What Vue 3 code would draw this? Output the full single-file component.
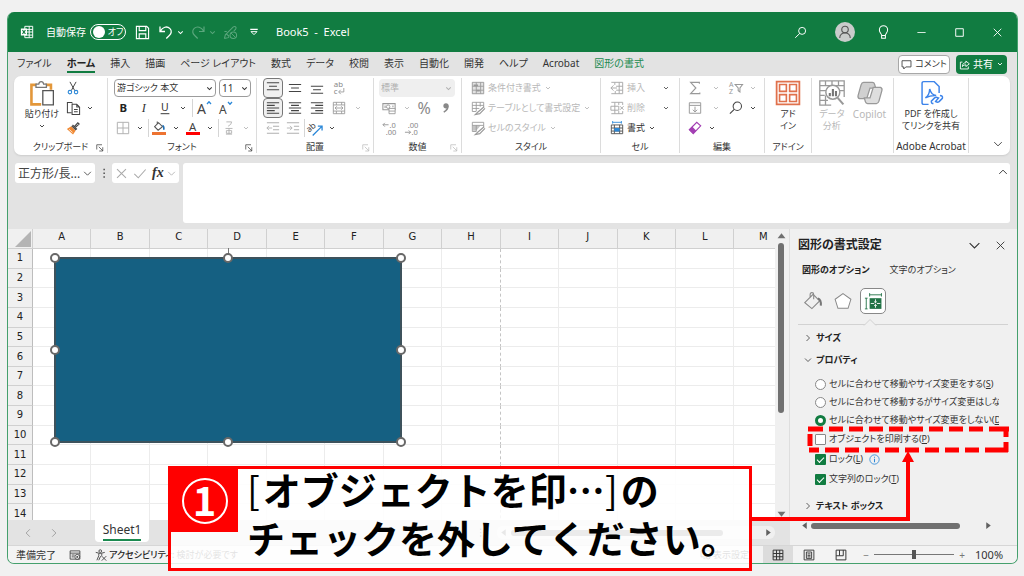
<script setup>
import { h, ref } from 'vue'

const K = '#444', G = '#b0b0b0', W = '#fff'
const line = (d, c = K, w = 1.2, extra = '') => `<path d="${d}" fill="none" stroke="${c}" stroke-width="${w}" ${extra}/>`
const fill = (d, c = K) => `<path d="${d}" fill="${c}"/>`
const bars = (list, c = K) => line(list.map(([x, y, w]) => `M${x} ${y}h${w}`).join(''), c, 1.3)
const txt = (x, y, s, t, c, extra = '') =>
  `<text x="${x}" y="${y}" font-size="${s}" fill="${c}" font-family="Noto Sans, sans-serif" ${extra}>${t}</text>`

const icons = {
  excel: line('M5.5 1.5h9v13h-9zM5.5 5h9M5.5 8h9M5.5 11.5h9M10.5 1.5v13', W, 1.1) + fill('M1 4h7v8H1z', W) + line('M2.8 5.8l3.4 4.4M6.2 5.8l-3.4 4.4', '#117c41', 1.2),
  save: line('M1.5 1.5h11l2 2v11h-13zM4.5 1.5v4.5h7v-4.5M4.5 14.5v-5h7v5', W, 1.2),
  undo: line('M2 2.5v5h5M2.3 7.2C4.5 3 9 1.8 11.8 4.4c2.4 2.4 1.6 5.2-.5 7.1L8.3 14.5', W, 1.3),
  redo: line('M14 2.5v5h-5M13.7 7.2C11.5 3 7 1.8 4.2 4.4c-2.4 2.4-1.6 5.2.5 7.1L7.7 14.5', '#5aa67c', 1.2),
  pen: line('M1.5 14.5l1-4L11 2q1.5-1 2.5 0t0 2.5L11.5 6.5M1.5 14.5l4-1 1-1M3.5 9.5l3 2.5M4 7h-2.5', '#5aa67c', 1.1) + '<circle cx="11" cy="11" r="3.5" fill="none" stroke="#5aa67c" stroke-width="1.1"/>' + line('M8.5 8.5l5 5', '#5aa67c', 1),
  qat: line('M3 4.5h10', W, 1.4) + line('M4 7.5h8L8 11.5z', W, 1.3),
  search: '<circle cx="10" cy="6" r="4.3" fill="none" stroke="#fff" stroke-width="1.2"/>' + line('M7 9.2L1.5 14.5', W),
  person: '<circle cx="8" cy="8" r="8" fill="#c9cccb"/><circle cx="8" cy="6" r="2.6" fill="none" stroke="#555" stroke-width=".9"/>' + line('M3.8 12.8c0-5.5 8.4-5.5 8.4 0', '#555', 0.9),
  bulb: line('M6 11.2C6 9 3.6 8.3 3.6 5.2a4.4 4.4 0 018.8 0C12.4 8.3 10 9 10 11.2zM6 11v3.2h4V11', W, 1.1),
  min: line('M2 8h12', W, 1.2),
  max: line('M2.5 2.5h11v11h-11z', W, 1.4),
  x: line('M2.5 2.5l11 11M13.5 2.5l-11 11', 'currentColor', 1.3),
  chev: line('M4 6l4 4 4-4', 'currentColor', 1.8),
  chevL: line('M2 5l6 6 6-6', 'currentColor', 1.4),
  chevU: line('M2 11l6-6 6 6', 'currentColor', 1.5),
  left: line('M11 2L5 8l6 6', 'currentColor', 1.4),
  right: line('M5 2l6 6-6 6', 'currentColor', 1.4),
  bubble: line('M1.5 2.5h13v9H7l-3 3v-3H1.5z', K, 1.3),
  share: line('M5 4.5H2v10h11.5V11M5 11c0-4 2-5.5 5-5.5V3l5 4-5 4V8.5C8 8.5 6.5 9 5 11z', W, 1.3),
  paste: line('M5 3H1.5v12h6M10 3h3.5v3', '#e3973a', 1.6) + '<path d="M4.3 4.5v-2H6Q6.200 1 7.500 1T9 2.500h1.700v2z" fill="#fff" stroke="#777" stroke-width=".8"/><path d="M8.500 6.500h6.500v8.800H8.500z" fill="#fff" stroke="#555" stroke-width=".8"/>',
  cut: line('M4.5 1L10 11M11.5 1L6 11', K, 1.1) + '<circle cx="4.5" cy="12.7" r="2" fill="none" stroke="#2b88d8" stroke-width="1.2"/><circle cx="11.5" cy="12.7" r="2" fill="none" stroke="#2b88d8" stroke-width="1.2"/>',
  copy: line('M6 12.5H1.5v-11h4.5l1 1', K, 1.1) + line('M6.5 3.5h5l3 3v8h-8zM11.5 3.5v3h3M8.5 9h4M8.5 11.5h4', K, 1.1),
  brush: fill('M1 9l5-3 5 5-3 4.5z', '#f08a35') + line('M6.5 5.5l5 5M7.5 4.5L9.5 6.5l4-4.5 1.5 1.5L10.5 7.5 12.5 9.5', K, 1.3) + line('M3.5 9.5l4 3.5', W, 0.8),
  bold: txt(4, 12.5, 13, 'B', '#222', 'font-weight="700"'),
  italic: txt(5.5, 12.5, 14, 'I', '#333', 'font-style="italic" style="font-family:Liberation Serif,serif"'),
  under: txt(3.5, 11.5, 12, 'U', '#333') + line('M3 14.5h10', '#333', 1.1),
  grow: txt(1, 13.5, 14, 'A', '#444') + line('M11 4l2-2.2L15 4', '#2b88d8', 1.3),
  shrink: txt(2, 13.5, 12, 'A', '#444') + line('M11 2l2 2.2L15 2', '#2b88d8', 1.3),
  borders: line('M1.5 1.5h13v13h-13zM8 1.5v13M1.5 8h13', G, 1.1),
  bucket: line('M3 6.5l4.5-4.5 4.5 4.5-5 4zM6 3V.5', '#555', 1.2) + line('M12 5q2 1 1.5 5', '#1f6fb5', 1.8) + fill('M0 12.5h16V16H0z', '#ed7331'),
  fontcol: txt(3.5, 11, 13, 'A', '#444') + fill('M0 12.5h16V16H0z', '#ff0000'),
  ruby: line('M5 1h6q0 3-4 5', G, 1) + line('M4 8.5h8M4.5 15h7M5 11h6v3H5zM8 8.5V15', G, 1),
  top: bars([[1, 2, 14], [3.5, 6, 9], [1, 10, 14]]),
  mid: bars([[1, 4, 14], [3.5, 8, 9], [1, 12, 14]]),
  bot: bars([[1, 6, 14], [3.5, 10, 9], [1, 14, 14]]),
  al: bars([[1, 2, 14], [1, 5, 9], [1, 8, 14], [1, 11, 9], [1, 14, 14]]),
  ac: bars([[1, 2, 14], [3.5, 5, 9], [1, 8, 14], [3.5, 11, 9], [1, 14, 14]]),
  ar: bars([[1, 2, 14], [6, 5, 9], [1, 8, 14], [6, 11, 9], [1, 14, 14]]),
  wrap: txt(2, 7, 9, 'ab', '#888') + txt(2, 15, 9, 'c', '#888') + line('M13.5 8v4.5H8M10 10l-2.5 2.5L10 15', '#999', 1),
  merge: line('M1.5 1.5h13v13h-13zM1.5 4.5h13M1.5 11.5h13M5 1.5v3M11 1.5v3M5 11.5v3M11 11.5v3M3.5 8h9M5.5 6l-2 2 2 2M10.5 6l2 2-2 2', '#999', 1),
  outdent: bars([[1, 2, 14], [8, 6, 7], [8, 10, 7], [1, 14, 14]], G) + line('M7 8H1M3.5 5.5L1 8l2.5 2.5', G, 1),
  indent: bars([[1, 2, 14], [9, 6, 6], [9, 10, 6], [1, 14, 14]], G) + line('M1 8h6M4.5 5.5L7 8l-2.5 2.5', G, 1),
  orient: txt(-1, 9, 9, 'ab', '#444', 'transform="rotate(-40 5 8)"') + line('M5 15.5L14.5 6M10.5 5.5H15V10', '#2b88d8', 1.4),
  currency: line('M1 3h14v7H1zM3.5 5v3M12.5 5v2', '#999', 1.2) + '<circle cx="7" cy="6.5" r="2" fill="none" stroke="#999"/><path d="M8 8.5h7v6H8zM8 11.5h7" fill="#fff" stroke="#999"/>',
  percent: txt(0.5, 13.5, 16, '%', '#8a8a8a'),
  comma: '<circle cx="8" cy="5" r="3.5" fill="#888"/>' + line('M10.5 5q.5 5-5.5 8.5', '#888', 2),
  decInc: txt(8, 7, 8, '.0', '#888') + txt(4, 15, 8, '.00', '#888') + line('M7 4H1M3 2L1 4l2 2', '#999', 1),
  decDec: txt(4, 7, 8, '.00', '#888') + txt(8, 15, 8, '.0', '#888') + line('M1 12h6M5 10l2 2-2 2', '#999', 1),
  cond: fill('M1 1h14v14H1z', '#e2e2e2') + line('M1.5 1.5h13v13h-13zM1.5 6h13M1.5 10.5h13M6 1.5v13M11 1.5v13', '#9a9a9a', 1) + fill('M3 4h5v2H3zM6 10h4v2H6z', '#999'),
  tstyle: line('M1.5 12V1.5h13V7M1.5 5h13M1.5 8.5h8M6 1.5v10M10.5 1.5v5M1.5 12H6', '#9a9a9a', 1) + line('M15 6.5l-7 6-3 3 5-1 6-6', '#9a9a9a', 1.4),
  cstyle: fill('M2 5h9l-5 6H2z', '#c4c4c4') + line('M1.5 12V1.5h13V7M1.5 5h13M1.5 12H6V5', '#9a9a9a', 1) + line('M15 6.5l-7 6-3 3 5-1 6-6', '#9a9a9a', 1.4),
  cins: line('M1.5 1.5h13v13h-13M5.5 1.5v3M10.5 1.5v13M6 11.5v3M7 6h7.5M7 10.5h7.5M8 8H1M4 5L1 8l3 3', '#aaa', 1.1),
  cdel: line('M1.5 1.5h13v3M1.5 14.5h13v-3M5.5 1.5v13M10 1.5v3M10 11.5v3M1 6h9v4.5H1zM11.5 6l4 4M15.5 6l-4 4', '#aaa', 1.1),
  cfmt: line('M1.5 4.5h13v10h-13zM5 4.5v10M11 4.5v10M1.5 8h13M1.5 11.5h13', '#555', 1.1) + fill('M5 8h6v4H5z', '#2b88d8') + line('M3 1.5h10M3 0v3M13 0v3', '#2b88d8', 1),
  sum: line('M13 3V1.5H3L9 8l-6 6.5h10.5V13', '#999', 1.3),
  sort: txt(0, 7, 8, 'A', '#999') + txt(0, 15, 8, 'Z', '#999') + line('M7 4h8.5l-3 4v4.5l-2-1.5V8z', '#999', 1.2),
  fillD: line('M1.5 2h13v12h-13zM1.5 5h13M8 6.5v6M5.5 10L8 12.5 10.5 10', '#999', 1.1),
  find: '<circle cx="9.5" cy="6" r="4.8" fill="none" stroke="#444" stroke-width="1.2"/>' + line('M6 9.5L1 14.5', K, 1.3),
  eraser: line('M1.5 10L10 1.5l4.5 4L6 14.5z', '#a33fb3', 1.3) + fill('M1.5 10L5 6.5l4.5 4.5L6 14.5z', '#a33fb3'),
  addin: line('M1 1h14v14H1z', '#e0714c', 1.1) + line('M2.8 2.8H7V7H2.8zM9 2.8h4.2V7H9zM2.8 9H7v4.2H2.8zM9 9h4.2v4.2H9z', '#e0714c', 1),
  analyze: line('M.5.5h15v3H.5zM.5 3.5v12h7M15.5 3.5v7M.5 6.5h4M.5 9.5h3M.5 12.5h5M4 9.5v6M4 .5v3M8 .5v3M12 .5v3M12 6.5h3.5', '#999', 0.8) + '<circle cx="8.5" cy="7.5" r="4.3" fill="#fff" stroke="#999" stroke-width=".9"/>' + line('M11.5 11l3.5 4', '#999', 1.3) + fill('M6 8h1.3v2H6zM7.9 5.5h1.3V10H7.9zM9.8 6.8h1.3V10H9.8z', '#777'),
  copilot: '<path d="M4 1.5h5.5q1 0 1.3 1L11.5 5H8L6 11.5H1.5Q.3 11 .7 9.5L2.5 3q.5-1.5 1.5-1.5z" fill="#d0d0d0" stroke="#999" stroke-width=".8"/><path d="M12 14.5H6.5q-1 0-1.3-1L4.5 11H8l2-6.5h4.5q1.2.5.8 2L13.5 13q-.5 1.5-1.5 1.5z" fill="#dedede" stroke="#999" stroke-width=".8"/>',
  pdf: line('M6.5 15h-3Q2.500 15 2.500 14V2q0-1 1-1H10l3 3v4M4.500 11q2.500-1.500 2.700-5.500 1 4 4 4-3.500-.2-6.700 1.500', '#3d84ea', 0.9) + line('M9.5 14.5q-1.500 0-1.300-1.500l2-2q1-.7 2 0M13.500 9.500q2 0 1.500 1.800l-2 2q-1 .7-2 0M10.500 13.500l2.500-2.800', '#3d84ea', 0.9),
  launch: line('M1.5 11V1.5H12M5.5 5.5l8 8M13.5 6.5V14H6.5', 'currentColor', 1.4),
  dots: fill('M7 1h2.5v2.5H7zM7 7h2.5v2.5H7zM7 13h2.5v2.5H7z', '#555'),
  check: line('M1.5 9L6 13.5 14.5 4', 'currentColor', 1.2),
  fillTool: line('M1.5 9l7-7L14 7.5 7.5 14zM6 5V2Q6 .5 7.5.5T9 2v4', '#888', 0.9) + line('M12.5 5.5q3 1 2.5 6', '#777', 1.7),
  pentagon: '<path d="M8 1.5l7 5-2.5 8h-9L1 6.500z" fill="#fff" stroke="#888" stroke-width=".9"/>',
  sizeTool: fill('M5 5.5h10.5V15H5z', '#217346') + line('M5 2.5h10.5M5 1v3M15.5 1v3M2 5.5V15M.8 5.5h2.4M.8 15h2.4', '#217346', 0.8) + line('M10.2 6.5v3M10.2 11v3M6 10.2h3M11.5 10.2h3M9 8.5l1.2 1 1.2-1M9 12.2l1.2-1 1.2 1', W, 0.8),
  info: '<circle cx="8" cy="8" r="6.8" fill="none" stroke="#2b88d8" stroke-width="1.2"/>' + line('M8 7v5M8 4v1.5', '#2b88d8', 1.5),
  macro: line('M1.5 2.5h13v11h-13zM1.5 5.5h13M3.5 8h4M3.5 10.5h3', K, 1.2) + '<circle cx="11" cy="10.5" r="3.3" fill="#f3f3f3" stroke="#444" stroke-width="1.2"/><circle cx="11" cy="10.5" r="1.3" fill="#444"/>',
  a11y: '<circle cx="7" cy="2.8" r="1.8" fill="none" stroke="#444" stroke-width="1.2"/>' + line('M1 4.5q6 3 12 0M5 6v3l-2.5 6M9 6v2.5l-2 2L5 15M9 9.5l6 6M15 9.5l-6 6', K, 1.2),
  disp: line('M9 11.5H1.5v-9h13V8M5 14h3', K, 1.2) + '<circle cx="12" cy="12" r="2.5" fill="none" stroke="#444" stroke-width="1.5"/>',
  vgrid: line('M1.5 1.5h13v13h-13zM1.5 6h13M1.5 10.3h13M6 1.5v13M10.3 1.5v13', '#333', 1.3),
  vpage: line('M1.5 1.5h13v13h-13zM4.5 4h7v8.5h-7zM6 6.5h4M6 8.5h4M6 10.5h4', '#333', 1.2),
  vbreak: line('M1.5 1.5h13v13h-13zM6 1.5V9h5V1.5M1.5 9H6', '#333', 1.3),
  tl: fill('M12 2v12L4 8z', 'currentColor'),
  tr: fill('M4 2v12l8-6z', 'currentColor'),
  tu: fill('M1 13h14L8 4z', 'currentColor'),
  td: fill('M1 3h14L8 12z', 'currentColor'),
}
const Ic = (p) => h('svg', { width: p.s || 14, height: p.s || 14, viewBox: '0 0 16 16', innerHTML: icons[p.n], 'aria-hidden': 'true' })
Ic.props = ['n', 's']

const tabs = ['ファイル', 'ホーム', '挿入', '描画', 'ページ レイアウト', '数式', 'データ', '校閲', '表示', '自動化', '開発', 'ヘルプ', 'Acrobat', '図形の書式']
const cols = 'ABCDEFGHIJKLM'.split('')
const rows = Array.from({ length: 14 }, (_, i) => i + 1)
const handles = ['nw', 'n', 'ne', 'w', 'e', 'sw', 's', 'se']
const moves = [
  ['セルに合わせて移動やサイズ変更をする(', 'S', ')'],
  ['セルに合わせて移動するがサイズ変更はしない(', 'M', ')'],
  ['セルに合わせて移動やサイズ変更をしない(', 'D', ')'],
]
const placement = ref(2)
const printObj = ref(false)
const locked = ref(true)
const lockText = ref(true)
const zoom = ref(100)
const cellName = ref('正方形/長...')
</script>

<template>
  <main class="page">
    <div class="window">
      <header class="title">
        <Ic n="excel" class="logo" />
        <span class="auto">自動保存</span>
        <button class="switch" role="switch" aria-checked="false" aria-label="自動保存"><i></i>オフ</button>
        <button class="tb" aria-label="保存"><Ic n="save" s="15" /></button>
        <button class="tb" aria-label="元に戻す"><Ic n="undo" s="16" /></button>
        <Ic n="chev" s="9" class="tchev" />
        <button class="tb" aria-label="やり直し"><Ic n="redo" s="16" /></button>
        <Ic n="chev" s="9" class="tchev dim" />
        <button class="tb" aria-label="ペン"><Ic n="pen" s="15" /></button>
        <button class="tb" aria-label="カスタマイズ"><Ic n="qat" s="12" /></button>
        <span class="doc">Book5&nbsp; -&nbsp; Excel</span>
        <div class="winbtns">
          <button aria-label="検索"><Ic n="search" s="13" /></button>
          <button aria-label="アカウント"><Ic n="person" s="20" /></button>
          <button aria-label="ヒント"><Ic n="bulb" s="15" /></button>
          <button aria-label="最小化"><Ic n="min" s="11" /></button>
          <button aria-label="最大化"><Ic n="max" s="11" /></button>
          <button aria-label="閉じる"><Ic n="x" s="11" /></button>
        </div>
      </header>

      <nav class="tabs">
        <a v-for="(t, i) in tabs" :key="t" href="#" :class="{ on: i === 1, ctx: i === 13 }">{{ t }}</a>
        <button class="comment"><Ic n="bubble" s="11" />コメント</button>
        <button class="share"><Ic n="share" s="11" />共有<Ic n="chev" s="8" /></button>
      </nav>

      <section class="ribbon">
        <div class="group g-clip">
          <div class="body split">
            <button class="big"><Ic n="paste" s="26" /><span>貼り付け</span><Ic n="chev" s="8" /></button>
            <div class="stack">
              <div class="row"><button class="b"><Ic n="cut" /></button></div>
              <div class="row"><button class="b"><Ic n="copy" s="15" /></button><button class="c"><Ic n="chev" s="8" /></button></div>
              <div class="row"><button class="b"><Ic n="brush" /></button></div>
            </div>
          </div>
          <footer>クリップボード<Ic n="launch" s="8" class="launch" /></footer>
        </div>

        <div class="group g-font">
          <div class="body">
            <div class="row selects">
              <label class="sel face"><select aria-label="フォント"><option>游ゴシック 本文</option></select><Ic n="chev" s="9" /></label>
              <label class="sel size"><select aria-label="サイズ"><option>11</option></select><Ic n="chev" s="9" /></label>
            </div>
            <div class="row gap">
              <button class="b"><Ic n="bold" /></button><button class="b"><Ic n="italic" /></button><button class="b"><Ic n="under" /></button>
              <button class="c"><Ic n="chev" s="8" /></button><i class="sep"></i>
              <button class="b"><Ic n="grow" s="16" /></button><button class="b"><Ic n="shrink" s="16" /></button>
            </div>
            <div class="row">
              <button class="b"><Ic n="borders" /></button><button class="c"><Ic n="chev" s="8" /></button><i class="sep"></i>
              <button class="b"><Ic n="bucket" /></button><button class="c"><Ic n="chev" s="8" /></button>
              <button class="b"><Ic n="fontcol" /></button><button class="c"><Ic n="chev" s="8" /></button><i class="sep"></i>
              <button class="b"><Ic n="ruby" /></button><button class="c off"><Ic n="chev" s="8" /></button>
            </div>
          </div>
          <footer>フォント<Ic n="launch" s="8" class="launch" /></footer>
        </div>

        <div class="group g-align">
          <div class="body">
            <div class="row gap2"><button class="b on"><Ic n="top" /></button><button class="b"><Ic n="mid" /></button><button class="b"><Ic n="bot" /></button><button class="b"><Ic n="wrap" /></button></div>
            <div class="row gap2"><button class="b on"><Ic n="al" /></button><button class="b"><Ic n="ac" /></button><button class="b"><Ic n="ar" /></button><button class="b"><Ic n="merge" /></button><button class="c off"><Ic n="chev" s="8" /></button></div>
            <div class="row"><button class="b"><Ic n="outdent" /></button><button class="b"><Ic n="indent" /></button><i class="sep"></i><button class="b"><Ic n="orient" s="15" /></button><button class="c"><Ic n="chev" s="8" /></button></div>
          </div>
          <footer>配置<Ic n="launch" s="8" class="launch off" /></footer>
        </div>

        <div class="group g-num">
          <div class="body">
            <div class="row"><label class="sel fmt"><select aria-label="表示形式" disabled><option>標準</option></select><Ic n="chev" s="9" /></label></div>
            <div class="row gap"><button class="b"><Ic n="currency" /></button><button class="c off"><Ic n="chev" s="8" /></button><button class="b"><Ic n="percent" s="16" /></button><button class="b"><Ic n="comma" s="12" /></button></div>
            <div class="row gap2"><button class="b"><Ic n="decInc" s="15" /></button><button class="b"><Ic n="decDec" s="15" /></button></div>
          </div>
          <footer>数値<Ic n="launch" s="8" class="launch off" /></footer>
        </div>

        <div class="group g-style">
          <div class="body">
            <div class="row"><button class="t off"><Ic n="cond" />条件付き書式<Ic n="chev" s="8" /></button></div>
            <div class="row"><button class="t off"><Ic n="tstyle" />テーブルとして書式設定<Ic n="chev" s="8" /></button></div>
            <div class="row"><button class="t off"><Ic n="cstyle" />セルのスタイル<Ic n="chev" s="8" /></button></div>
          </div>
          <footer>スタイル</footer>
        </div>

        <div class="group g-cell">
          <div class="body">
            <div class="row"><button class="t off wide"><Ic n="cins" />挿入<Ic n="chev" s="8" class="dark" /></button></div>
            <div class="row"><button class="t off wide"><Ic n="cdel" />削除<Ic n="chev" s="8" class="dark" /></button></div>
            <div class="row"><button class="t"><Ic n="cfmt" />書式<Ic n="chev" s="8" /></button></div>
          </div>
          <footer>セル</footer>
        </div>

        <div class="group g-edit">
          <div class="body">
            <div class="row"><button class="b"><Ic n="sum" /></button><button class="c off e"><Ic n="chev" s="8" /></button><button class="b"><Ic n="sort" /></button><button class="c off"><Ic n="chev" s="8" /></button></div>
            <div class="row"><button class="b"><Ic n="fillD" /></button><button class="c off e"><Ic n="chev" s="8" /></button><button class="b"><Ic n="find" /></button><button class="c"><Ic n="chev" s="8" /></button></div>
            <div class="row"><button class="b"><Ic n="eraser" /></button><button class="c"><Ic n="chev" s="8" /></button></div>
          </div>
          <footer>編集</footer>
        </div>

        <div class="group g-add">
          <div class="body split"><button class="big"><Ic n="addin" s="26" /><span>アド<br>イン</span></button></div>
          <footer>アドイン</footer>
        </div>

        <div class="group g-data">
          <div class="body split">
            <button class="big off"><Ic n="analyze" s="26" /><span>データ<br>分析</span></button>
            <button class="big off latin"><Ic n="copilot" s="26" /><span>Copilot</span></button>
          </div>
        </div>

        <div class="group g-pdf">
          <div class="body split"><button class="big"><Ic n="pdf" s="26" /><span>PDF を作成し<br>てリンクを共有</span></button></div>
          <footer class="latin">Adobe Acrobat</footer>
        </div>
        <button class="collapse" aria-label="リボンを折りたたむ"><Ic n="chevL" s="10" /></button>
      </section>

      <section class="fbar">
        <div class="namebox"><input v-model="cellName" aria-label="名前ボックス"><Ic n="chevL" s="9" /></div>
        <Ic n="dots" s="10" class="grip" />
        <div class="fx">
          <button aria-label="キャンセル"><Ic n="x" s="13" /></button>
          <button aria-label="入力"><Ic n="check" s="14" /></button>
          <button class="fn" aria-label="関数の挿入">fx</button>
          <Ic n="chevL" s="9" />
        </div>
        <div class="formula"><textarea aria-label="数式バー"></textarea><Ic n="chevU" s="10" /></div>
      </section>

      <div class="work">
        <div class="left">
          <div class="sheetrow">
            <div class="sheet">
              <table>
                <thead><tr><th class="corner"><i></i></th><th v-for="c in cols" :key="c">{{ c }}</th></tr></thead>
                <tbody><tr v-for="r in rows" :key="r"><th>{{ r }}</th><td v-for="c in cols" :key="c" :class="{ brk: c === 'H' }"></td></tr></tbody>
              </table>
              <div class="shape"><i class="stem"></i><i v-for="p in handles" :key="p" class="knob" :class="p"></i></div>
            </div>
            <div class="vscroll"><Ic n="tu" s="9" /><i class="thumb"></i><Ic n="td" s="9" /></div>
          </div>
          <div class="sheettabs">
            <button aria-label="前のシート"><Ic n="left" s="10" /></button>
            <button aria-label="次のシート"><Ic n="right" s="10" /></button>
            <button class="sheettab"><span>Sheet1</span></button>
            <Ic n="dots" s="9" class="grip2" />
            <div class="hscroll main"><Ic n="tl" s="9" /><i class="thumb"></i><Ic n="tr" s="9" /></div>
          </div>
        </div>

        <aside class="pane">
          <div class="phead"><h2>図形の書式設定</h2><button aria-label="オプション"><Ic n="chevL" s="13" /></button><button aria-label="閉じる"><Ic n="x" s="11" /></button></div>
          <div class="ptabs"><a href="#" class="on">図形のオプション</a><a href="#">文字のオプション</a></div>
          <div class="picons">
            <button aria-label="塗りつぶしと線"><Ic n="fillTool" s="19" /></button>
            <button aria-label="効果"><Ic n="pentagon" s="18" /></button>
            <button class="on" aria-label="サイズとプロパティ"><Ic n="sizeTool" s="18" /></button>
          </div>
          <div class="rule"><svg width="12" height="7" viewBox="0 0 12 7" aria-hidden="true"><path d="M0 6.5l6-6 6 6" fill="#f0f0f0" stroke="#d2d2d2" /></svg></div>
          <button class="sect"><Ic n="right" s="8" />サイズ</button>
          <button class="sect"><Ic n="chevL" s="8" />プロパティ</button>
          <div class="opts">
            <label v-for="(m, i) in moves" :key="i" class="opt rad"><input v-model="placement" type="radio" name="place" :value="i"><span>{{ m[0] }}<u>{{ m[1] }}</u>{{ m[2] }}</span></label>
            <label class="opt"><input v-model="printObj" type="checkbox"><span>オブジェクトを印刷する(<u>P</u>)</span></label>
            <label class="opt"><input v-model="locked" type="checkbox"><span>ロック(<u>L</u>)</span><Ic n="info" s="11" class="info" /></label>
            <label class="opt"><input v-model="lockText" type="checkbox"><span>文字列のロック(<u>T</u>)</span></label>
          </div>
          <button class="sect last"><Ic n="right" s="8" />テキスト ボックス</button>
          <div class="hscroll side"><Ic n="tl" s="9" /><i class="thumb"></i><Ic n="tr" s="9" /></div>
        </aside>
      </div>

      <footer class="status">
        <span class="ready">準備完了</span>
        <Ic n="macro" s="12" class="mac" />
        <Ic n="a11y" s="12" />
        <b>アクセシビリティ:</b><span class="need">検討が必要です</span>
        <span class="disp"><Ic n="disp" s="11" />表示設定</span>
        <button class="on" aria-label="標準"><Ic n="vgrid" s="12" /></button>
        <button aria-label="ページ レイアウト"><Ic n="vpage" s="12" /></button>
        <button aria-label="改ページ プレビュー"><Ic n="vbreak" s="12" /></button>
        <span class="pm">−</span>
        <input v-model="zoom" class="zoom" type="range" min="0" max="200" aria-label="ズーム">
        <span class="pm">+</span>
        <span class="pct">{{ zoom }}%</span>
      </footer>
    </div>

    <svg class="marks" viewBox="0 0 280 160" width="280" height="160" aria-hidden="true">
      <path d="M68 19h15M89 19h14M109 19h14M129 19h14M149 19h14M169 19h14M189 19h14M209 19h14M229 19h14M249 19h20M266 19v8M266 32v10M70 24v12M69 40h10M85 40h14M105 40h14M125 40h14M145 40h14M165 40h14M185 40h14M205 40h14M225 40h14M245 40h23" fill="none" stroke="#f00" stroke-width="5" />
      <path d="M9 109h159V50" fill="none" stroke="#f00" stroke-width="4" />
      <path d="M168 41l6 11h-12z" fill="#f00" />
    </svg>
    <div class="callout">
      <div class="num"><span>1</span></div>
      <p><span class="br">[</span>オブジェクトを印…<span class="br">]</span>の<br>チェックを外してください。</p>
    </div>
  </main>
</template>

<style>
html, body { background: #f1f1f1; }
</style>
<style scoped>
* { box-sizing: border-box; }
.page { position: relative; min-height: 100vh; padding: 12px 6px 12px 7px; font: 10px/12px "Noto Sans", "Noto Sans CJK JP", sans-serif; font-feature-settings: "palt"; color: #333; overflow: hidden; }
button { font: inherit; font-feature-settings: inherit; color: inherit; background: none; border: 0; padding: 0; display: flex; align-items: center; justify-content: center; white-space: nowrap; }
a { color: inherit; text-decoration: none; }
svg { display: block; flex: none; overflow: visible; }
.window { display: flex; flex-direction: column; min-height: calc(100vh - 24px); border: 1px solid #45a06d; border-top: 0; border-radius: 7px; background: #e3e3e3; overflow: hidden; }
.title { height: 40px; background: #117c41; color: #fff; display: flex; align-items: center; padding-left: 12px; }
.auto { margin-left: 12px; width: 40px; white-space: nowrap; }
.switch { margin: 0 6px 0 4px; width: 36px; height: 16px; border: 1px solid #fff; border-radius: 8px; gap: 3px; font-size: 9px; }
.switch i { width: 12px; height: 12px; border-radius: 50%; background: #fff; }
.tb { width: 20px; height: 20px; margin-right: 3px; }
.tchev { margin: 0 3px 0 -3px; }
.dim { color: #5aa67c; }
.tb + .tb { margin-left: 1px; }
.doc { margin-left: 9px; font-size: 11px; white-space: nowrap; }
.winbtns { margin-left: auto; display: flex; padding-right: 1px; }
.winbtns button { width: 38px; height: 26px; }
.winbtns button:nth-child(1) { width: 52px; }
.tabs { height: 24px; display: flex; align-items: center; gap: 15px; padding: 0 10px 0 9px; white-space: nowrap; }
.tabs a { height: 18px; line-height: 17px; border-bottom: 2px solid transparent; }
.tabs a.on { font-weight: 700; border-color: #117c41; color: #222; }
.tabs a.ctx { color: #1b8a50; }
.comment, .share { height: 19px; border-radius: 4px; gap: 3px; }
.comment { margin-left: auto; width: 52px; background: #fff; border: 1px solid #a8a8a8; font-size: 9px; }
.share { margin-left: -9px; width: 51px; background: #117c41; color: #fff; }
.ribbon { display: flex; margin: 0 7px 0 6px; background: #fff; border-radius: 7px; height: 79px; padding: 2px 0 0; box-shadow: 0 1px 2px #ccc; font-size: 9px; }
.group { position: relative; display: flex; flex-direction: column; flex: none; border-right: 1px solid #dcdcdc; margin-bottom: 2px; white-space: nowrap; }
.group footer { height: 13px; margin-top: 2px; line-height: 13px; text-align: center; color: #333; }
.ribbon .latin { font-size: 10px; }
.launch { position: absolute; right: 3px; bottom: 1px; }
.off { color: #b8b8b8; }
.body { height: 60px; padding-left: 5px; }
.split { display: flex; justify-content: center; padding: 0; }
.row { height: 20px; display: flex; align-items: center; }
.gap { gap: 1px; }
.gap2 { gap: 2px; }
.b { width: 20px; height: 20px; }
.b.on { border: 1px solid #777; border-radius: 4px; background: #f0f0f0; }
.c { width: 14px; height: 20px; }
.c.e { width: 21px; }
.sep { width: 2px; height: 18px; border-right: 1px solid #d5d5d5; }
.big { flex-direction: column; justify-content: flex-start; padding-top: 2px; line-height: 12px; gap: 2px; }
.g-clip { width: 94px; }
.g-clip .split { gap: 3px; }
.g-clip .big { width: 36px; }
.g-font { width: 149px; }
.g-align { width: 117px; }
.g-align .body { padding-left: 6px; }
.g-num { width: 88px; }
.g-style { width: 139px; }
.g-style .body, .g-cell .body { padding-left: 9px; }
.g-cell { width: 79px; }
.g-edit { width: 85px; }
.g-add { width: 47px; }
.g-data { width: 82px; }
.g-data .split { gap: 8px; }
.g-pdf { width: 75px; }
.t { gap: 3px; height: 20px; }
.t.wide .dark { margin-left: 14px; color: #555; }
.sel { position: relative; display: flex; align-items: center; height: 18px; }
.sel select { appearance: none; width: 100%; height: 18px; border: 1px solid #9c9c9c; border-radius: 4px; background: #fff; padding: 0 2px; font: inherit; font-feature-settings: inherit; color: #333; }
.sel svg { position: absolute; right: 2px; }
.sel.size select { font-size: 10px; }
.selects { gap: 3px; padding-left: 1px; }
.face { width: 102px; }
.size { width: 32px; }
.fmt { width: 76px; color: #b0b0b0; }
.sel.fmt select { border: 0; background: #efefef; color: #b0b0b0; opacity: 1; }
.collapse { margin: 60px 6px 0 auto; width: 12px; height: 12px; }
.fbar { display: flex; align-items: flex-start; margin: 8px 7px 6px 7px; height: 60px; }
.namebox, .fx { display: flex; align-items: center; height: 20px; background: #fff; border-radius: 3px; }
.namebox { width: 80px; padding-right: 3px; }
.namebox input { flex: 1; min-width: 0; border: 0; background: none; font: inherit; font-size: 12px; padding: 0 0 0 3px; color: #444; outline: 0; }
.grip { margin: 5px 3px 0 4px; }
.fx { width: 67px; gap: 5px; padding-left: 3px; color: #aaa; }
.fn { font: italic 700 14px/18px "Liberation Serif", serif; color: #333; }
.fx > svg { margin-left: -2px; }
.formula { flex: 1; display: flex; align-self: stretch; margin-left: 4px; background: #fff; border-radius: 3px; padding: 4px 2px 0 4px; }
.formula textarea { flex: 1; border: 0; resize: none; outline: 0; height: 50px; background: none; }
.work { flex: 1; display: flex; min-height: 0; }
.left { flex: 1; min-width: 0; display: flex; flex-direction: column; }
.sheetrow { flex: 1; display: flex; min-height: 0; }
.sheet { position: relative; flex: 1; min-width: 0; height: 291px; overflow: hidden; background: #fff; }
table { border-collapse: separate; border-spacing: 0; table-layout: fixed; width: calc(100% + 18px); height: 295px; font: 10px/12px "DejaVu Sans", sans-serif; }
th, td { padding: 0; border-right: 1px solid #ececec; border-bottom: 1px solid #ececec; }
th { background: #f0f0f0; font-weight: 400; color: #222; border-color: #d0d0d0; }
thead th { height: 20px; padding-bottom: 4px; }
tbody th { border-right-color: #bdbdbd; }
thead .corner { width: 25px; padding: 0; }
.corner i { display: block; margin: 1px 1px 0 auto; width: 16px; height: 16px; background: #b4b4b4; clip-path: polygon(100% 0, 100% 100%, 0 100%); }
td.brk { border-right: 1px dashed #c4c4c4; }
.shape { position: absolute; left: 47px; top: 29px; width: 346px; height: 184px; background: #156082; outline: 2px solid #3d525c; outline-offset: -1px; }
.stem { position: absolute; left: 50%; top: -10px; height: 10px; border-left: 1px solid #777; }
.knob { position: absolute; width: 10px; height: 10px; margin: -5px; border: 2px solid #686868; border-radius: 50%; background: #fff; left: 0; top: 0; }
.n, .s { left: 50%; }
.ne, .e, .se { left: 100%; }
.w, .e { top: 50%; }
.sw, .s, .se { top: 100%; }
.vscroll { width: 15px; display: flex; flex-direction: column; align-items: center; background: #f0f0f0; color: #707070; padding: 2px 2px 1px 0; border-right: 1px solid #dedede; }
.vscroll .thumb { width: 6px; height: 170px; margin: 3px 0 auto; border-radius: 3px; background: #707070; }
.sheettabs { height: 25px; display: flex; align-items: center; padding-left: 7px; color: #999; }
.sheettabs button { width: 26px; height: 20px; }
.sheettabs .sheettab { align-self: flex-start; width: 54px; height: 22px; margin-left: 28px; background: #fff; border-radius: 0 0 4px 4px; color: #333; font-size: 12px; }
.sheettab span { border-bottom: 2px solid #1b8a50; line-height: 18px; height: 20px; }
.grip2 { margin-left: auto; }
.hscroll { display: flex; align-items: center; color: #606060; border-radius: 6px; background: #f0f0f0; height: 13px; }
.hscroll .thumb { height: 6px; border-radius: 3px; background: #707070; }
.main { width: 278px; margin: 0 15px 0 12px; padding: 0 2px; gap: 3px; }
.main .thumb { width: 212px; }
.main svg:last-child, .side svg:last-child { margin-left: auto; }
.pane { width: 227px; flex: none; background: #f0f0f0; padding: 0 9px 10px 8px; display: flex; flex-direction: column; overflow: hidden; }
.phead { height: 32px; display: flex; align-items: center; }
.phead h2 { flex: 1; margin: 0; font-size: 12px; line-height: 18px; color: #222; }
.phead button { width: 26px; height: 20px; }
.phead button:last-child { margin-right: -5px; }
.ptabs { height: 18px; display: flex; gap: 20px; padding-left: 4px; font-size: 9px; line-height: 18px; white-space: nowrap; }
.ptabs .on { font-weight: 700; color: #222; }
.picons { margin-top: 9px; display: flex; gap: 5px; padding-left: 2px; }
.picons button { width: 25px; height: 26px; }
.picons .on { border: 1px solid #888; border-radius: 5px; background: #fff; width: 26px; }
.rule { height: 11px; padding: 5px 0 0 66px; border-bottom: 1px solid #d2d2d2; margin-bottom: 2px; }
.sect { height: 22px; flex: none; justify-content: flex-start; gap: 4px; padding-left: 6px; font-size: 9px; font-weight: 700; color: #222; }
.opts { margin-top: 4px; padding-left: 17px; width: 201px; overflow: hidden; white-space: nowrap; font-size: 9px; }
.opt { display: flex; align-items: center; height: 20px; }
.rad { height: 18px; }
.opt input { appearance: none; flex: none; margin: 0 3px 0 0; width: 11px; height: 11px; border: 1px solid #888; background: #fff; border-radius: 1px; }
.opt input[type="radio"] { border-radius: 50%; }
.opt input[type="radio"]:checked { border: 3px solid #117c41; }
.opt input[type="checkbox"]:checked { border: 0; background: #117c41; display: grid; place-items: center; }
.opt input[type="checkbox"]:checked::after { content: ""; width: 6px; height: 3px; border: solid #fff; border-width: 0 0 1px 1px; transform: rotate(-45deg); }
.info { margin-left: 6px; }
.last { margin-top: 6px; }
.side { width: 197px; margin-top: 2px; padding: 0 2px; gap: 2px; }
.side .thumb { width: 149px; }
.status { height: 18px; flex: none; display: flex; align-items: center; padding: 0 12px 0 8px; background: #f3f3f3; border-top: 1px solid #d6d6d6; white-space: nowrap; }
.ready { width: 45px; }
.mac { margin: 0 14px 0 8px; }
.status b { margin-left: 2px; font-size: 9px; font-weight: 500; color: #222; }
.need { margin-left: 2px; font-size: 9px; }
.status .disp { margin-left: auto; display: flex; align-items: center; gap: 2px; margin-right: 14px; font-size: 9px; }
.status button { width: 32px; height: 17px; }
.status button.on { width: 30px; background: #dcdcdc; }
.pm { width: 12px; text-align: center; color: #777; }
.status button + .pm { margin-left: 3px; }
.zoom { appearance: none; width: 80px; height: 10px; margin: 0 2px; background: linear-gradient(#777, #777) center / 100% 1px no-repeat; }
.zoom::-webkit-slider-thumb { appearance: none; width: 4px; height: 9px; background: #555; }
.status .pct { margin-left: 7px; width: 30px; font-size: 11px; }
.marks { position: absolute; left: 740px; top: 410px; }
.callout { position: absolute; left: 168px; top: 466px; width: 584px; height: 105px; border: 3px solid #f00; background: rgba(255, 255, 255, 0.86); display: flex; color: #000; font-feature-settings: normal; }
.num { width: 67px; height: 63px; background: #f00; display: grid; place-items: center; }
.num span { width: 46px; height: 46px; border: 2px solid #fff; border-radius: 50%; color: #fff; font: 700 40px/38px "Noto Sans CJK JP", sans-serif; text-align: center; }
.callout p { margin: -4px 0 0 9px; font: 700 38px/48px "Noto Sans CJK JP", sans-serif; white-space: nowrap; }
.br { font-weight: 400; margin-right: 3px; }
</style>
